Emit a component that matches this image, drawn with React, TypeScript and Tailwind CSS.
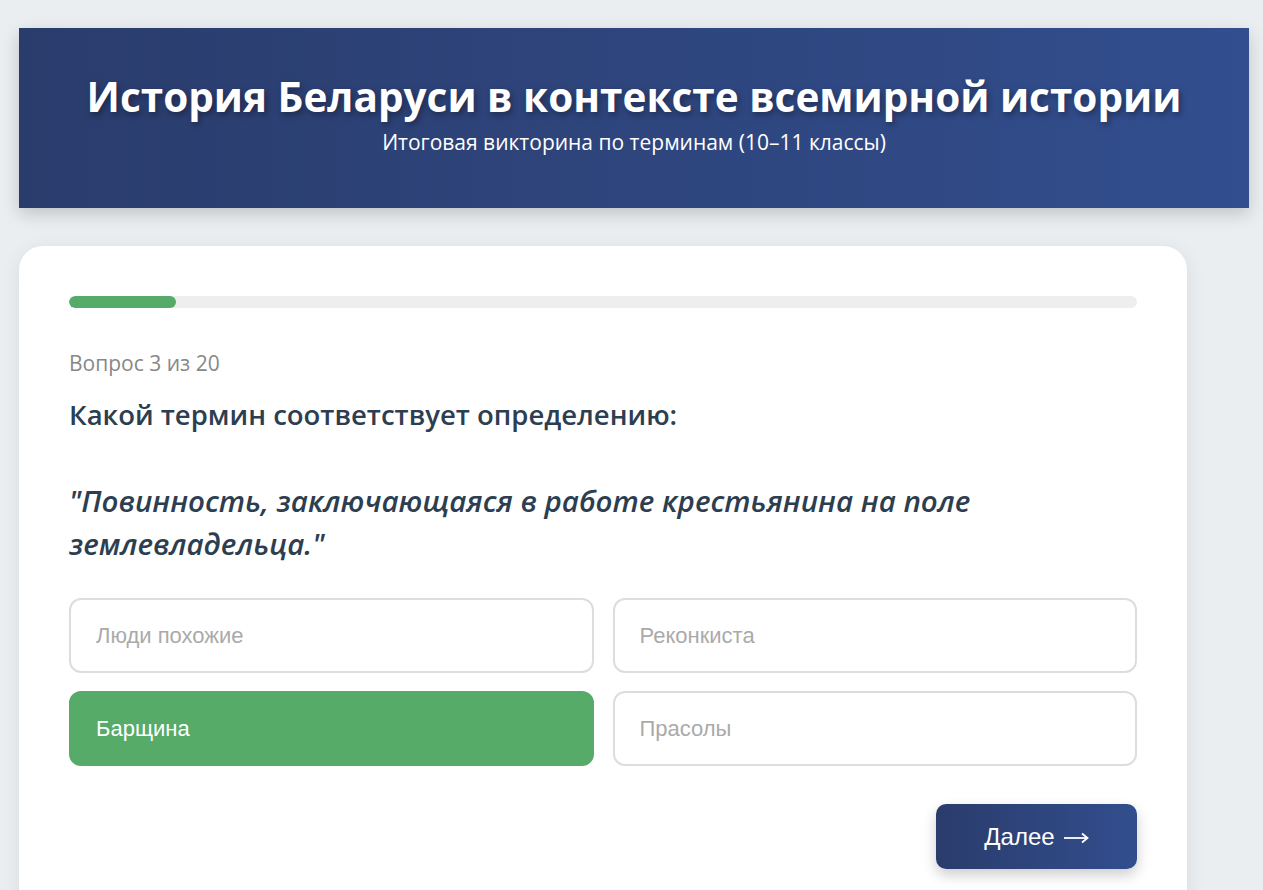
export default function App() {
  const options = [
    { label: 'Люди похожие', selected: false },
    { label: 'Реконкиста', selected: false },
    { label: 'Барщина', selected: true },
    { label: 'Прасолы', selected: false },
  ];

  return (
    <div className="min-h-[890px] bg-[#ebeef0] pt-[28px] px-[19px] font-['Open_Sans',sans-serif]">
      <header className="w-[1230px] h-[180px] flex flex-col items-center pt-[44px] bg-gradient-to-r from-[#2a3c6c] to-[#324e8e] shadow-[0_6px_16px_rgba(0,0,0,0.18)] text-white">
        <h1 className="text-[40.5px] font-bold leading-[50px] [text-shadow:2px_3px_6px_rgba(0,0,0,0.35)]">
          История Беларуси в контексте всемирной истории
        </h1>
        <p className="mt-[6px] text-[21px] leading-[28px]">Итоговая викторина по терминам (10–11 классы)</p>
      </header>

      <main className="mt-[38px] w-[1168px] bg-white rounded-[24px] shadow-[0_4px_20px_rgba(0,0,0,0.08)] p-[50px]">
        <div className="h-[12px] w-full rounded-full bg-[#eeeeee] overflow-hidden">
          <div className="h-full bg-[#55ab67] rounded-full" style={{ width: '10%' }} />
        </div>

        <div className="mt-[40px] text-[21px] leading-[30px] text-[#888888]">Вопрос 3 из 20</div>

        <div className="mt-[15px] text-[#2c3e50] leading-[43px]">
          <div className="text-[27.5px] font-semibold">Какой термин соответствует определению:</div>
          <div className="h-[43px]" />
          <div className="text-[29.5px] font-semibold italic">
            "Повинность, заключающаяся в работе крестьянина на поле землевладельца."
          </div>
        </div>

        <div className="mt-[33px] grid grid-cols-2 gap-x-[19px] gap-y-[18px] font-['Liberation_Sans',sans-serif]">
          {options.map((o) => (
            <button
              key={o.label}
              className={
                o.selected
                  ? 'h-[75px] rounded-[12px] border-2 border-[#55ab67] bg-[#55ab67] text-white text-left px-[25px] text-[22px]'
                  : 'h-[75px] rounded-[12px] border-2 border-[#dddddd] bg-white text-[#aaaaaa] text-left px-[25px] text-[22px]'
              }
            >
              {o.label}
            </button>
          ))}
        </div>

        <div className="mt-[38px] flex justify-end">
          <button className="w-[201px] h-[65px] rounded-[10px] bg-gradient-to-r from-[#2a3c6c] to-[#324e8e] text-white text-[24px] font-['Liberation_Sans',sans-serif] shadow-[0_6px_14px_rgba(0,0,0,0.2)] flex items-center justify-center gap-[8px]">
            <span>Далее</span>
            {/* long thin arrow, as in the original glyph */}
            <svg width="26" height="12" viewBox="0 0 26 12" fill="none" stroke="currentColor" strokeWidth="1.8" className="mt-[3px]">
              <path d="M1 6h23" />
              <path d="M19 1.5L24.5 6L19 10.5" />
            </svg>
          </button>
        </div>
      </main>
    </div>
  );
}
